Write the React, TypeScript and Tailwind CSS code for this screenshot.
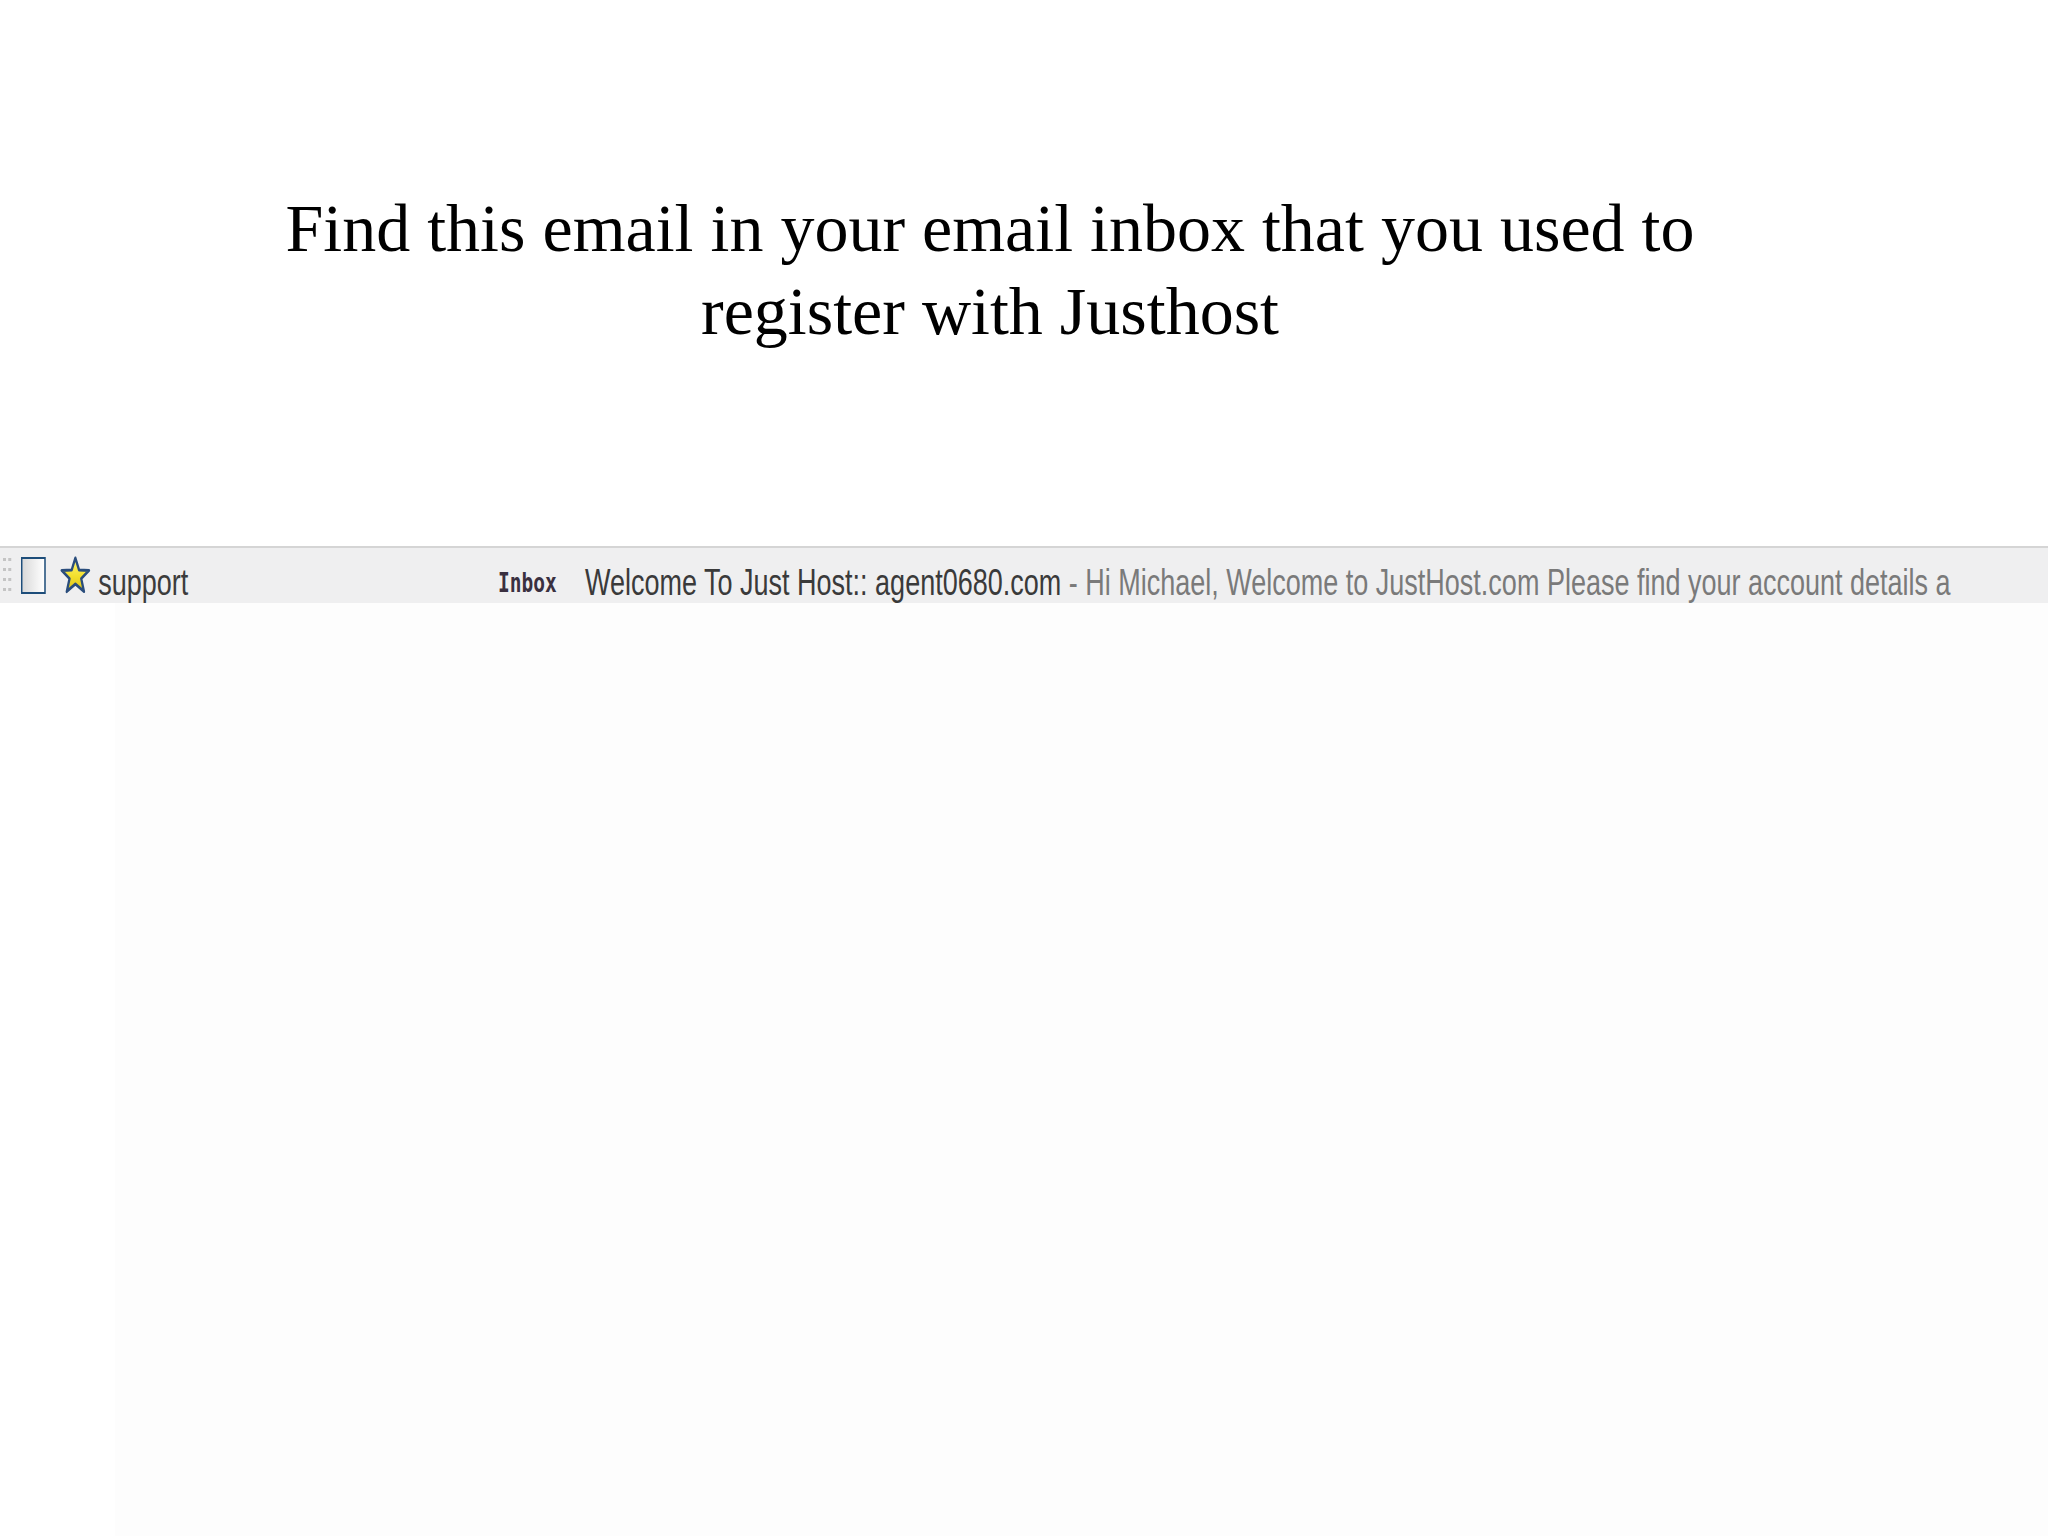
import React from 'react';

function GripDots() {
  const rows = [0, 1, 2, 3];
  return (
    <div className="mt-[10px] ml-[4px] flex w-[11px] flex-col gap-[7px]">
      {rows.map((r) => (
        <div key={r} className="flex justify-between">
          <span className="h-[3px] w-[4px] bg-[#c4c4c4]"></span>
          <span className="h-[3px] w-[4px] bg-[#c4c4c4]"></span>
        </div>
      ))}
    </div>
  );
}

function Star() {
  return (
    <svg
      className="mt-[8px] ml-[19px] h-[38px] w-[41px]"
      viewBox="0 0 40 38"
      preserveAspectRatio="none"
    >
      <defs>
        <linearGradient id="starFill" x1="0" y1="0" x2="0" y2="1">
          <stop offset="0" stopColor="#fdf57a" />
          <stop offset="0.55" stopColor="#f2df2c" />
          <stop offset="1" stopColor="#dcc21a" />
        </linearGradient>
      </defs>
      <polygon
        points="20,2 24.8,14 37.8,14.4 27.6,22.6 31.2,35.6 20,28 8.8,35.6 12.4,22.6 2.2,14.4 15.2,14"
        fill="url(#starFill)"
        stroke="#2a4d7c"
        strokeWidth="3"
        strokeLinejoin="round"
      />
    </svg>
  );
}

export default function App() {
  return (
    <div className="flex min-h-screen flex-col bg-white">
      {/* Slide title */}
      <div className="w-[1980px] pt-[187px] text-center font-['Liberation_Serif',serif] text-[68px] leading-[83px] text-black">
        Find this email in your email inbox that you used to
        <br />
        register with Justhost
      </div>

      {/* Inbox row */}
      <div className="mt-[193px] h-[57px] overflow-hidden border-t-2 border-[#d5d5d5] bg-[#efeff0]">
        <div className="flex h-full w-[2740px] origin-left scale-x-[0.75] items-start font-['Liberation_Sans',Arial,sans-serif] text-[36px] leading-[36px]">
          <GripDots />
          <div className="mt-[9px] ml-[13px] h-[37px] w-[33px] border-[2.5px] border-[#1d4d7a] bg-gradient-to-r from-[#d9d9d9] to-white"></div>
          <Star />
          <span className="mt-[17px] ml-[10px] w-[533px] text-[#3c3c3c]">support</span>
          <span className="mt-[20px] w-[116px] font-['DejaVu_Sans_Mono',monospace] text-[26px] leading-[30px] font-bold text-[#3a3040]">
            Inbox
          </span>
          <span className="mt-[17px] whitespace-nowrap">
            <span className="text-[#3a3a3a]">Welcome To Just Host:: agent0680.com</span>
            <span className="text-[#7a7a7a]"> - Hi Michael, Welcome to JustHost.com Please find your account details a</span>
          </span>
        </div>
      </div>

      {/* Empty area below */}
      <div className="ml-[115px] flex-1 bg-[#fdfdfd]"></div>
    </div>
  );
}
